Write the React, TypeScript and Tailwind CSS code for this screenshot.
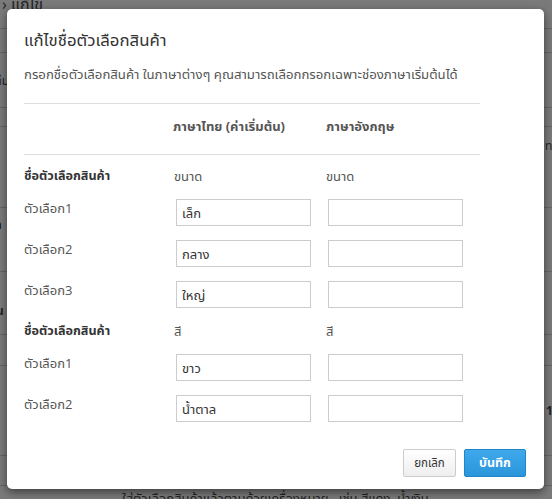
import React from "react";

function Row({ label, value }: { label: string; value: string }) {
  return (
    <>
      <div className="text-[13px] text-[#555] leading-[18px]">{label}</div>
      <div className="h-[27px] border border-[#ccc] bg-white text-[13px] text-[#333] leading-[25px] px-[5px]">
        <span className="relative top-[1px]">{value}</span>
      </div>
      <div className="h-[27px] border border-[#ccc] bg-white" />
    </>
  );
}

export default function App() {
  return (
    <div className="relative w-[552px] h-[499px] overflow-hidden bg-[#7a7a7a] font-['Open_Sans','Noto_Looped_Thai','Noto_Sans_Thai',sans-serif]">
      {/* background page (dimmed) */}
      <div className="flex flex-col">
        <div className="h-[29px] border-b border-[#646464]" />
        <div className="h-[24px] border-b border-[#646464]" />
        <div className="h-[55px] border-b border-[#646464]" />
        <div className="h-[19px] border-b border-[#646464]" />
        <div className="h-[81px] border-b border-[#646464]" />
        <div className="h-[64px] border-b border-[#646464]" />
        <div className="h-[63px] border-b border-[#646464]" />
        <div className="h-[31px] border-b border-[#646464]" />
        <div className="h-[90px] border-b border-[#646464]" />
        <div className="h-[30px] border-b border-[#646464]" />
      </div>
      <div className="absolute left-[2px] top-[-8px] text-[16px] text-[#222]">› แก้ไข</div>
      <div className="absolute left-[-6px] top-[72px] text-[12px] text-[#222]">ต่ม</div>
      <div className="absolute left-[-6px] top-[216px] text-[12px] font-bold text-[#222]">ท</div>
      <div className="absolute left-[-4px] top-[302px] text-[12px] font-bold text-[#222]">น</div>
      <div className="absolute left-[545px] top-[137px] text-[12px] text-[#222]">ni:</div>
      <div className="absolute left-[546px] top-[402px] text-[12px] font-bold text-[#222]">1</div>
      <div className="absolute left-[122px] top-[488px] text-[13px] leading-[20px] text-[#222] whitespace-nowrap">
        ใส่ตัวเลือกสินค้าแล้วตามด้วยเครื่องหมาย , เช่น สีแดง, น้ำเงิน
      </div>

      {/* modal */}
      <div className="absolute left-[7px] top-[9px] w-[537px] h-[480px] bg-white rounded-[5px] shadow-[0_3px_9px_rgba(0,0,0,0.5)] px-[17px] pt-[20px]">
        <h3 className="text-[16.8px] leading-[22px] text-[#333] font-normal">แก้ไขชื่อตัวเลือกสินค้า</h3>
        <p className="mt-[14px] text-[13.2px] leading-[18px] text-[#555]">
          กรอกชื่อตัวเลือกสินค้า ในภาษาต่างๆ คุณสามารถเลือกกรอกเฉพาะช่องภาษาเริ่มต้นได้
        </p>
        <div className="mt-[20px] w-[456px] border-t border-[#ddd]" />
        <div className="grid grid-cols-[135px_135px_135px] gap-x-[17px] pt-[12px] pb-[18px]">
          <div />
          <div className="text-[13px] font-bold text-[#555] leading-[20px] -ml-[3px] whitespace-nowrap">ภาษาไทย (ค่าเริ่มต้น)</div>
          <div className="text-[13px] font-bold text-[#555] leading-[20px] -ml-[2px] whitespace-nowrap">ภาษาอังกฤษ</div>
        </div>
        <div className="w-[456px] border-t border-[#ddd]" />

        <div className="grid grid-cols-[135px_135px_135px] gap-x-[17px] gap-y-[14px] pt-[12px] items-start">
          <div className="text-[12.6px] font-bold text-[#333] leading-[18px] whitespace-nowrap">ชื่อตัวเลือกสินค้า</div>
          <div className="text-[13px] text-[#555] leading-[18px] -ml-[2px]">ขนาด</div>
          <div className="text-[13px] text-[#555] leading-[18px] -ml-[2px]">ขนาด</div>
          <Row label="ตัวเลือก1" value="เล็ก" />
          <Row label="ตัวเลือก2" value="กลาง" />
          <Row label="ตัวเลือก3" value="ใหญ่" />
          <div className="text-[12.6px] font-bold text-[#333] leading-[18px] whitespace-nowrap">ชื่อตัวเลือกสินค้า</div>
          <div className="text-[13px] text-[#555] leading-[18px] -ml-[2px]">สี</div>
          <div className="text-[13px] text-[#555] leading-[18px] -ml-[2px]">สี</div>
          <Row label="ตัวเลือก1" value="ขาว" />
          <Row label="ตัวเลือก2" value="น้ำตาล" />
        </div>

        <div className="flex justify-end gap-[8px] mt-[27px] pr-[1px]">
          <button className="h-[28px] w-[53px] rounded-[2px] border border-[#ccc] bg-gradient-to-b from-[#fff] to-[#eee] text-[11.5px] text-[#333]">
            ยกเลิก
          </button>
          <button className="h-[28px] w-[62px] rounded-[2px] border border-[#1f86c8] bg-gradient-to-b from-[#3fa9ec] to-[#2b95db] text-[12.5px] font-bold text-white">
            บันทึก
          </button>
        </div>
      </div>
    </div>
  );
}
